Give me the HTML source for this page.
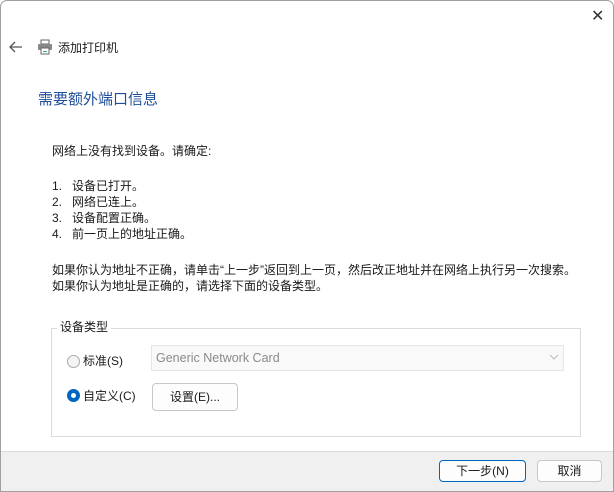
<!DOCTYPE html>
<html><head><meta charset="utf-8"><style>
*{margin:0;padding:0;box-sizing:border-box}
body{width:614px;height:492px;overflow:hidden;background:#fff;font-family:"Liberation Sans","Noto Sans CJK SC",sans-serif;font-size:12px;color:#1a1a1a;position:relative}
.win{position:absolute;left:0;top:0;width:614px;height:492px;border:1px solid #a0a0a0;border-radius:7px 7px 0 0;overflow:hidden;background:#fff}
.a{position:absolute;white-space:nowrap}
.footer{position:absolute;left:0;top:450px;width:614px;height:42px;background:#f0f0f0;border-top:1px solid #dcdcdc}
.btn{position:absolute;border:1px solid #c8c8c8;border-radius:4px;background:#fdfdfd;text-align:center;font-size:12px}
</style></head><body><div class="win">
<div class="a" style="left:590px;top:5px;font-size:16px;color:#333">✕</div>
<svg class="a" style="left:8px;top:40px" width="14" height="12" viewBox="0 0 14 12"><path d="M13 6H1.5M6 1L1 6l5 5" fill="none" stroke="#555" stroke-width="1.3"/></svg>
<svg class="a" style="left:36px;top:38px" width="16" height="16" viewBox="0 0 16 16"><rect x="4" y="1" width="8" height="4" fill="#fff" stroke="#666"/><rect x="1" y="5" width="14" height="6" rx="1" fill="#888"/><rect x="4" y="9" width="8" height="6" fill="#fff" stroke="#666"/><rect x="6" y="12" width="4" height="1" fill="#3a9"/></svg>
<div class="a" style="left:57px;top:38px;font-size:12px">添加打印机</div>
<div class="a" style="left:37px;top:87px;font-size:15px;color:#1e4e9a">需要额外端口信息</div>
<div class="a" style="left:51px;top:141px">网络上没有找到设备。请确定:</div>
<div class="a" style="left:51px;top:176px">1.&nbsp;&nbsp;&nbsp;设备已打开。</div>
<div class="a" style="left:51px;top:192px">2.&nbsp;&nbsp;&nbsp;网络已连上。</div>
<div class="a" style="left:51px;top:208px">3.&nbsp;&nbsp;&nbsp;设备配置正确。</div>
<div class="a" style="left:51px;top:224px">4.&nbsp;&nbsp;&nbsp;前一页上的地址正确。</div>
<div class="a" style="left:51px;top:260px">如果你认为地址不正确，请单击“上一步”返回到上一页，然后改正地址并在网络上执行另一次搜索。</div>
<div class="a" style="left:51px;top:276px">如果你认为地址是正确的，请选择下面的设备类型。</div>
<div class="a" style="left:50px;top:327px;width:530px;height:109px;border:1px solid #dcdcdc"></div>
<div class="a" style="left:56px;top:317px;background:#fff;padding:0 3px">设备类型</div>
<div class="a" style="left:66px;top:354px;width:13px;height:13px;border:1px solid #aaa;border-radius:50%;background:#f4f4f4"></div>
<div class="a" style="left:82px;top:351px">标准(S)</div>
<div class="a" style="left:150px;top:344px;width:413px;height:26px;border:1px solid #e5e5e5;background:#f9f9f9;color:#8a8a8a;font-size:12.5px;padding:5px 4px">Generic Network Card</div>
<svg class="a" style="left:548px;top:353px" width="10" height="6"><path d="M1 1l4 4 4-4" fill="none" stroke="#bbb"/></svg>
<div class="a" style="left:66px;top:388px;width:13px;height:13px;border-radius:50%;background:#0067c0"></div>
<div class="a" style="left:70px;top:392px;width:5px;height:5px;border-radius:50%;background:#fff"></div>
<div class="a" style="left:82px;top:386px">自定义(C)</div>
<div class="btn" style="left:151px;top:382px;width:86px;height:28px;line-height:26px">设置(E)...</div>
<div class="footer"></div>
<div class="btn" style="left:438px;top:459px;width:87px;height:22px;line-height:20px;border-color:#0067c0">下一步(N)</div>
<div class="btn" style="left:536px;top:459px;width:65px;height:22px;line-height:20px">取消</div>
</div></body></html>
